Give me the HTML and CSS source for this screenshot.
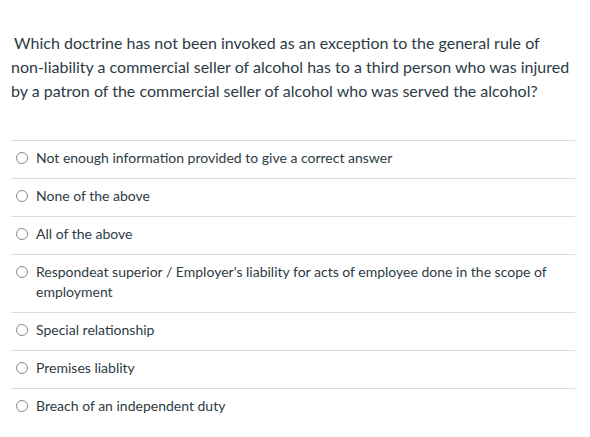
FILE: index.html
```html
<!DOCTYPE html>
<html lang="en">
<head>
<meta charset="utf-8">
<title>Question</title>
<link rel="stylesheet" href="styles.css">
</head>
<body>
<div class="question">
  <p class="question-text">Which doctrine has not been invoked as an exception to the general rule of non-liability a commercial seller of alcohol has to a third person who was injured by a patron of the commercial seller of alcohol who was served the alcohol?</p>
  <div class="answers">
    <label class="answer"><span class="radio"></span><span class="answer-text">Not enough information provided to give a correct answer</span></label>
    <label class="answer"><span class="radio"></span><span class="answer-text">None of the above</span></label>
    <label class="answer"><span class="radio"></span><span class="answer-text">All of the above</span></label>
    <label class="answer"><span class="radio"></span><span class="answer-text">Respondeat superior / Employer's liability for acts of employee done in the scope of employment</span></label>
    <label class="answer"><span class="radio"></span><span class="answer-text">Special relationship</span></label>
    <label class="answer"><span class="radio"></span><span class="answer-text">Premises liablity</span></label>
    <label class="answer last"><span class="radio"></span><span class="answer-text">Breach of an independent duty</span></label>
  </div>
</div>
</body>
</html>
```

FILE: styles.css
```css
html, body {
  margin: 0;
  padding: 0;
  background: #ffffff;
}
body {
  font-family: Lato, "Liberation Sans", sans-serif;
  color: #2d3b45;
}
.question {
  width: 564px;
  padding: 31px 0 0 11px;
}
.question-text {
  margin: 0;
  font-size: 16px;
  line-height: 24px;
  text-indent: 3px;
}
.answers {
  margin-top: 37px;
  display: flex;
  flex-direction: column;
}
.answer {
  display: flex;
  align-items: flex-start;
  gap: 8px;
  border-top: 1px solid #dcdcdc;
  padding: 7px 0 10px 5px;
  font-size: 14px;
  line-height: 20px;
}
.radio {
  flex: none;
  width: 10px;
  height: 10px;
  border: 1px solid #8b8b8b;
  border-radius: 50%;
  margin-top: 4px;
  background: #fff;
}
.answer-text {
  flex: 1;
  padding-right: 20px;
}
```
